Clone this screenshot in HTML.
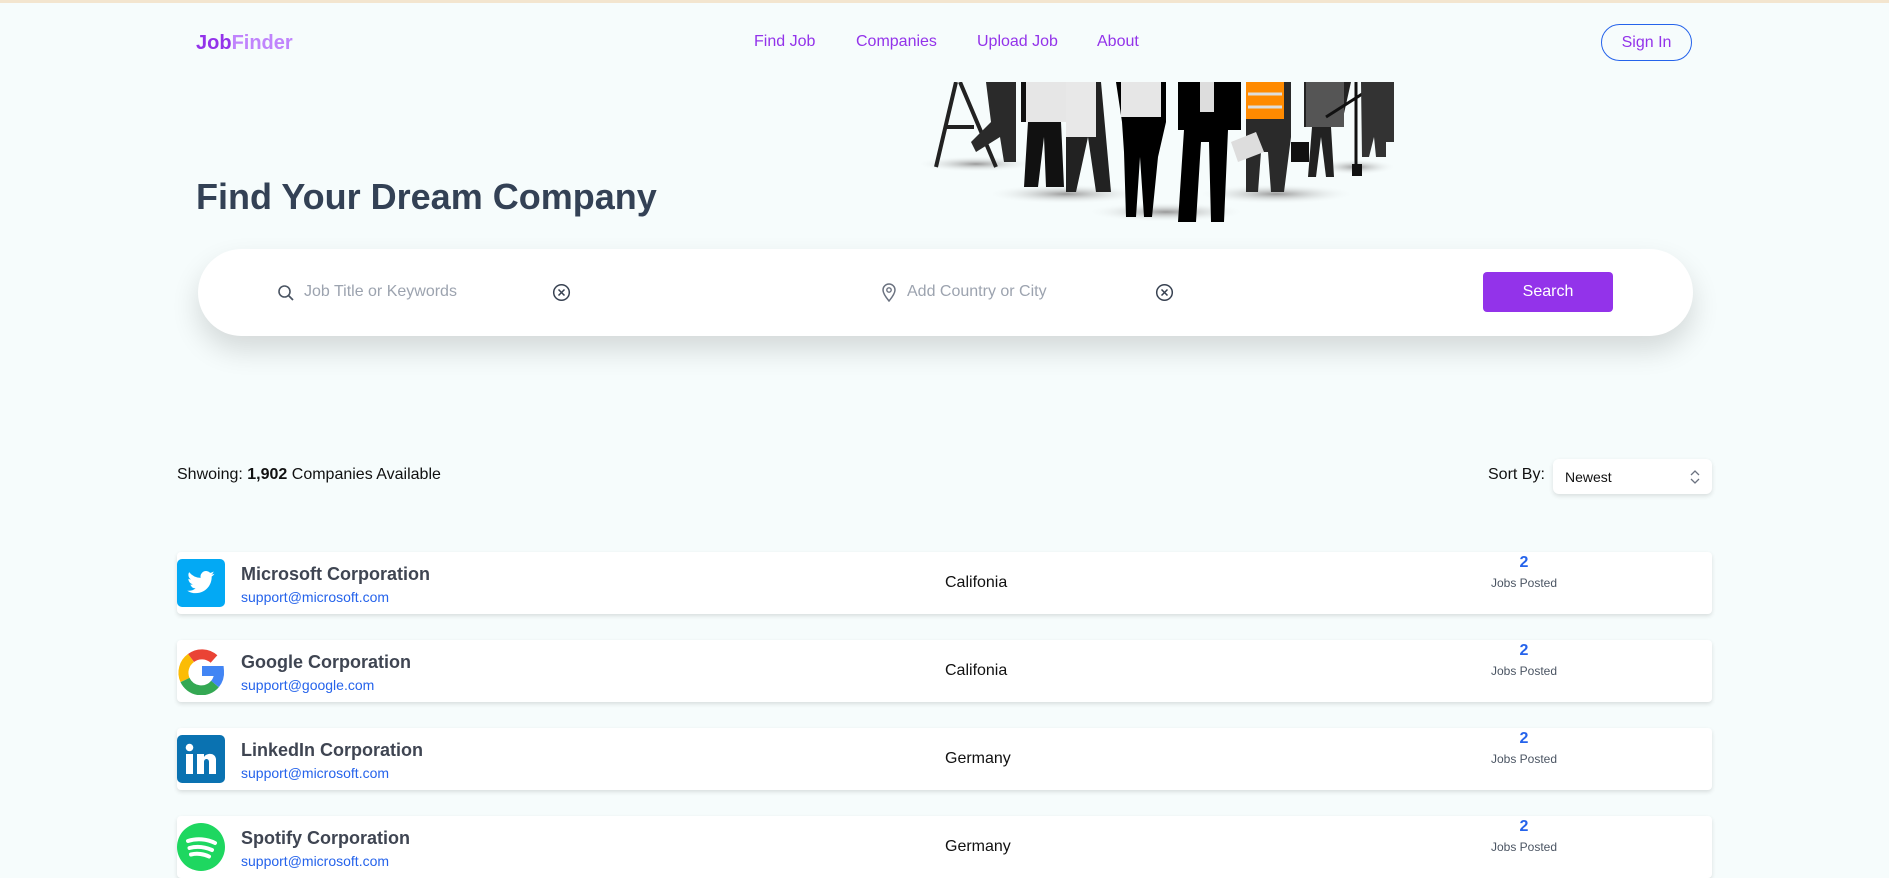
<!DOCTYPE html>
<html><head><meta charset="utf-8"><style>
*{margin:0;padding:0;box-sizing:border-box}
body{width:1889px;height:874px;overflow:hidden;background:#f6fcfc;font-family:"Liberation Sans",Arial,sans-serif;position:relative}
.a{position:absolute;white-space:nowrap}
.nav{color:#9333ea;font-size:16px;top:33px}
.card{position:absolute;left:177px;width:1535px;height:62px;background:#fff;border-radius:4px;box-shadow:0 2px 4px rgba(0,0,0,.12)}
.card .logo{position:absolute;left:0;top:7px;width:48px;height:48px;border-radius:5px}
.card .nm{position:absolute;left:64px;top:12px;font-size:18px;font-weight:bold;color:#3f4552}
.card .em{position:absolute;left:64px;top:37px;font-size:14px;color:#2563eb}
.card .loc{position:absolute;left:768px;top:22px;font-size:16px;color:#111}
.card .n{position:absolute;left:1297px;width:100px;text-align:center;top:2px;font-size:16px;font-weight:bold;color:#2563eb}
.card .jp{position:absolute;left:1297px;width:100px;text-align:center;top:24px;font-size:12px;color:#4b5563}
</style></head><body>
<div class="a" style="left:0;top:0;width:1889px;height:3px;background:#f3e5cf"></div>
<div class="a" style="left:196px;top:32px;font-size:20px;font-weight:bold"><span style="color:#9333ea">Job</span><span style="color:#c084fc">Finder</span></div>
<div class="a nav" style="left:754px">Find Job</div>
<div class="a nav" style="left:856px">Companies</div>
<div class="a nav" style="left:977px">Upload Job</div>
<div class="a nav" style="left:1097px">About</div>
<div class="a" style="left:1601px;top:24px;width:91px;height:37px;border:1px solid #2563eb;border-radius:20px;color:#9333ea;font-size:16px;text-align:center;line-height:35px">Sign In</div>

<svg class="a" style="left:916px;top:82px" width="482" height="142" viewBox="0 0 482 142">
<defs><radialGradient id="sh"><stop offset="0" stop-color="#999"/><stop offset="1" stop-color="#f6fcfc" stop-opacity="0"/></radialGradient></defs>
<ellipse cx="60" cy="82" rx="60" ry="8" fill="url(#sh)"/>
<ellipse cx="150" cy="112" rx="80" ry="10" fill="url(#sh)"/>
<ellipse cx="250" cy="130" rx="80" ry="10" fill="url(#sh)"/>
<ellipse cx="360" cy="112" rx="80" ry="10" fill="url(#sh)"/>
<ellipse cx="440" cy="85" rx="40" ry="8" fill="url(#sh)"/>
<path d="M40 0 L20 85 M44 0 L80 85 M28 45 L58 45" stroke="#222" stroke-width="4" fill="none"/>
<path d="M70 0 H100 V80 H88 L84 55 L60 70 L55 60 L75 40 Z" fill="#2a2a2a"/>
<path d="M105 0 H150 V40 H145 L148 105 H130 L128 55 L122 105 H108 L112 40 H105Z" fill="#111"/>
<path d="M110 0 H150 V40 H110Z" fill="#e6e6e6"/>
<path d="M150 0 H185 L195 110 H180 L172 55 L160 110 H150Z" fill="#222"/>
<path d="M150 0 H180 V55 H150Z" fill="#e8e8e8"/>
<path d="M200 0 H250 V40 L242 75 L236 135 H228 L224 75 L220 135 H210 L208 70 L206 40Z" fill="#000"/>
<path d="M205 0 H245 V35 H205Z" fill="#e6e6e6"/>
<path d="M262 0 H325 V48 L312 48 L308 140 H295 L293 60 L285 60 L280 140 H262 L268 48 H262Z" fill="#000"/>
<path d="M284 0 H298 V30 H284Z" fill="#ddd"/>
<path d="M330 0 H375 V55 L368 110 H355 L352 70 L345 70 L342 110 H330Z" fill="#2a2a2a"/>
<path d="M330 0 H368 V37 H330Z" fill="#ff8a00"/>
<path d="M332 12 H366 M332 25 H366" stroke="#ddd" stroke-width="3"/>
<path d="M315 60 L340 50 L348 70 L322 80Z" fill="#ddd"/>
<rect x="375" y="60" width="18" height="20" fill="#111"/>
<path d="M388 0 H435 L425 45 H415 L418 95 H410 L405 55 L400 95 H392 L396 45 H388Z" fill="#222"/>
<path d="M390 0 H428 V45 H390Z" fill="#555"/>
<path d="M440 0 V90 M465 0 L410 35" stroke="#111" stroke-width="3"/>
<rect x="436" y="82" width="10" height="12" fill="#111"/>
<path d="M445 0 H478 V60 H470 L470 75 H460 L458 55 L453 75 H446Z" fill="#333"/>
</svg>

<div class="a" style="left:196px;top:176px;font-size:36px;font-weight:bold;color:#334155">Find Your Dream Company</div>

<div class="a" style="left:198px;top:249px;width:1495px;height:87px;background:#fff;border-radius:44px;box-shadow:0 14px 28px rgba(0,0,0,.14)"></div>
<svg class="a" style="left:277px;top:284px" width="18" height="18" viewBox="0 0 18 18"><circle cx="7.5" cy="7.5" r="5.5" stroke="#4b5563" stroke-width="1.6" fill="none"/><path d="M11.5 11.5 L16 16" stroke="#4b5563" stroke-width="1.8"/></svg>
<div class="a" style="left:304px;top:283px;font-size:16px;color:#9ca3af">Job Title or Keywords</div>
<svg class="a" style="left:552px;top:283px" width="19" height="19" viewBox="0 0 19 19"><circle cx="9.5" cy="9.5" r="7.8" stroke="#374151" stroke-width="1.5" fill="none"/><path d="M6.5 6.5 L12.5 12.5 M12.5 6.5 L6.5 12.5" stroke="#374151" stroke-width="1.5"/></svg>
<svg class="a" style="left:881px;top:283px" width="16" height="20" viewBox="0 0 16 20"><path d="M8 18 C3 12 2 9 2 7 A6 6 0 0 1 14 7 C14 9 13 12 8 18Z" stroke="#6b7280" stroke-width="1.5" fill="none"/><circle cx="8" cy="7" r="2.2" stroke="#6b7280" stroke-width="1.4" fill="none"/></svg>
<div class="a" style="left:907px;top:283px;font-size:16px;color:#9ca3af">Add Country or City</div>
<svg class="a" style="left:1155px;top:283px" width="19" height="19" viewBox="0 0 19 19"><circle cx="9.5" cy="9.5" r="7.8" stroke="#374151" stroke-width="1.5" fill="none"/><path d="M6.5 6.5 L12.5 12.5 M12.5 6.5 L6.5 12.5" stroke="#374151" stroke-width="1.5"/></svg>
<div class="a" style="left:1483px;top:272px;width:130px;height:40px;background:#9333ea;border-radius:4px;color:#fff;font-size:16px;text-align:center;line-height:40px">Search</div>

<div class="a" style="left:177px;top:466px;font-size:16px;color:#111">Shwoing: <b>1,902</b> Companies Available</div>
<div class="a" style="left:1488px;top:466px;font-size:16px;color:#111">Sort By:</div>
<div class="a" style="left:1553px;top:459px;width:159px;height:35px;background:#fff;border-radius:6px;box-shadow:0 2px 5px rgba(0,0,0,.12)"></div>
<div class="a" style="left:1565px;top:469px;font-size:14px;color:#111">Newest</div>
<svg class="a" style="left:1688px;top:469px" width="14" height="16" viewBox="0 0 14 16"><path d="M3 6 L7 2 L11 6 M3 10 L7 14 L11 10" stroke="#6b7280" stroke-width="1.3" fill="none"/></svg>

<div class="card" style="top:552px">
<div class="logo" style="background:#03a9f4"><svg width="48" height="48" viewBox="0 0 24 24"><path transform="translate(4.5 4.5) scale(.62)" fill="#fff" d="M23 4.6a9.2 9.2 0 0 1-2.6.7 4.6 4.6 0 0 0 2-2.5 9 9 0 0 1-2.9 1.1 4.5 4.5 0 0 0-7.7 4.1A12.8 12.8 0 0 1 2.5 3.3a4.5 4.5 0 0 0 1.4 6 4.5 4.5 0 0 1-2-.6v.1a4.5 4.5 0 0 0 3.6 4.4 4.5 4.5 0 0 1-2 .1 4.5 4.5 0 0 0 4.2 3.1A9 9 0 0 1 1 18.3a12.8 12.8 0 0 0 6.9 2c8.3 0 12.8-6.9 12.8-12.8v-.6A9.2 9.2 0 0 0 23 4.6z"/></svg></div>
<div class="nm">Microsoft Corporation</div><div class="em">support@microsoft.com</div>
<div class="loc">Califonia</div><div class="n">2</div><div class="jp">Jobs Posted</div></div>

<div class="card" style="top:640px">
<div class="logo"><svg width="48" height="48" viewBox="0 0 48 48"><path d="M14 11 A18 18 0 0 1 37 12" stroke="#ea4335" stroke-width="10" fill="none"/><path d="M14 11 A18 18 0 0 0 8 33" stroke="#fbbc05" stroke-width="10" fill="none"/><path d="M8 33 A18 18 0 0 0 38 37" stroke="#34a853" stroke-width="10" fill="none"/><path d="M38 37 A18 18 0 0 0 42 24 H25" stroke="#4285f4" stroke-width="10" fill="none"/></svg></div>
<div class="nm">Google Corporation</div><div class="em">support@google.com</div>
<div class="loc">Califonia</div><div class="n">2</div><div class="jp">Jobs Posted</div></div>

<div class="card" style="top:728px">
<div class="logo" style="background:#0a72b1"><svg width="48" height="48" viewBox="0 0 48 48"><circle cx="12.5" cy="12.5" r="3.8" fill="#fff"/><rect x="9" y="19" width="7" height="20" fill="#fff"/><path d="M20 19 H27 V22 C29 18 38 17 39 24 V39 H32 V27 C32 23 27 23 27 27 V39 H20Z" fill="#fff"/></svg></div>
<div class="nm">LinkedIn Corporation</div><div class="em">support@microsoft.com</div>
<div class="loc">Germany</div><div class="n">2</div><div class="jp">Jobs Posted</div></div>

<div class="card" style="top:816px">
<div class="logo" style="border-radius:50%;background:#1ed760"><svg width="48" height="48" viewBox="0 0 48 48"><path d="M11 18 C20 15 30 16 38 20 M12.5 25 C20 23 28 24 35 27 M14 31.5 C20 30 27 31 32 33.5" stroke="#fff" stroke-width="4" stroke-linecap="round" fill="none"/></svg></div>
<div class="nm">Spotify Corporation</div><div class="em">support@microsoft.com</div>
<div class="loc">Germany</div><div class="n">2</div><div class="jp">Jobs Posted</div></div>
</body></html>
